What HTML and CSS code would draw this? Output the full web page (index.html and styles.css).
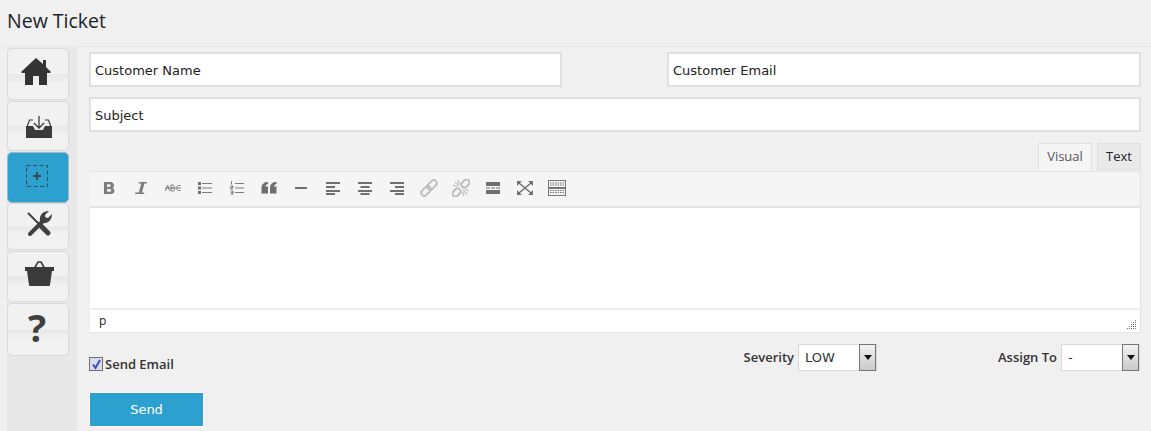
FILE: index.html
```html
<!DOCTYPE html>
<html lang="en">
<head>
<meta charset="utf-8">
<title>New Ticket</title>
<link rel="stylesheet" href="styles.css">
</head>
<body>
<header class="page-head"><h1>New Ticket</h1></header>
<div class="layout">
  <nav class="side">
    <a class="nav-btn nav-home"><svg width="30" height="28" viewBox="0 0 30 28"><path fill="#333" d="M15 0 L22 6 V2 H25 V9 L30 14 L29 15 H26 V27 H18 V18 H12 V27 H4 V15 H1 L0 14 Z"/></svg></a>
    <a class="nav-btn nav-inbox"><svg width="26" height="23" viewBox="0 0 26 23"><path fill="none" stroke="#3a3a3a" stroke-width="1.2" d="M7 4 H3.5 L1 11 M19 4 H22.5 L25 11"/><path fill="#3a3a3a" d="M0 10 H7 L9 14 H17 L19 10 H26 V22 H0 Z"/><path fill="none" stroke="#3a3a3a" stroke-width="1.3" d="M13 0 V12 M8 7 L13 12 L18 7"/></svg></a>
    <a class="nav-btn nav-active"><svg width="23" height="23" viewBox="0 0 23 23"><rect x=".5" y=".5" width="21" height="21" fill="none" stroke="#3d4a52" stroke-dasharray="4 2.5"/><path fill="none" stroke="#3d4a52" stroke-width="2" d="M11 7 V15 M7 11 H15"/></svg></a>
    <a class="nav-btn nav-tools"><svg width="26" height="26" viewBox="0 0 26 26"><path fill="none" stroke="#404040" stroke-width="2" d="M2 2 L13 13"/><path fill="none" stroke="#404040" stroke-width="5" stroke-linecap="round" d="M13.5 13.5 L22 22"/><path fill="none" stroke="#404040" stroke-width="4" stroke-linecap="round" d="M4 23 L16 11"/><path fill="#404040" d="M14 10 C13 4 17 0 23 0 L19 4 L19.5 6.5 L22 7 L26 3 C26 9 22 13 16 12 Z"/></svg></a>
    <a class="nav-btn nav-basket"><svg width="29" height="25" viewBox="0 0 29 25"><path fill="#3a3a3a" d="M0 6 H29 V10 H27 L25 24 Q25 25 24 25 H5 Q4 25 4 24 L2 10 H0 Z"/><path fill="none" stroke="#3a3a3a" stroke-width="1.6" d="M9 8 L13 1 H16 L20 8"/></svg></a>
    <a class="nav-btn nav-help"><span class="qmark">?</span></a>
  </nav>
  <main class="content">
    <div class="row-two">
      <input class="field" type="text" value="Customer Name">
      <input class="field" type="text" value="Customer Email">
    </div>
    <input class="field field-full" type="text" value="Subject">
    <div class="tabs">
      <span class="tab tab-on">Visual</span>
      <span class="tab">Text</span>
    </div>
    <section class="editor">
      <div class="toolbar">
        <span class="ti"><svg width="14" height="14" viewBox="0 0 14 14"><path fill="#7d7d7d" fill-rule="evenodd" d="M2 1 H8 C11 1 12 3 12 4.5 C12 6 11 6.6 10.5 7 C12 7.5 12.5 9 12.5 10 C12.5 12 11 13 8.5 13 H2 Z M5 3.3 V6 H7.5 C9 6 9 3.3 7.5 3.3 Z M5 8 V10.8 H8 C9.6 10.8 9.6 8 8 8 Z"/></svg></span>
        <span class="ti"><svg width="14" height="14" viewBox="0 0 14 14"><path fill="#7d7d7d" d="M5 1 H13 L12.6 2.6 H10.4 L8 11.4 H10.4 L10 13 H1 L1.4 11.4 H4.8 L7.2 2.6 H4.6 Z"/></svg></span>
        <span class="ti"><svg width="16" height="10" viewBox="0 0 16 10"><g fill="none" stroke="#7d7d7d"><path d="M0.5 8 L2.6 2 L4.7 8 M6 2 V8 H8.4 C10 8 10 5 8.4 5 H6 M6 2 H8.2 C9.6 2 9.6 5 8.2 5 M15.5 2.5 H13.5 C11.4 2.5 11.4 7.5 13.5 7.5 H15.5"/><path d="M0 5 H16"/></g></svg></span>
        <span class="ti"><svg width="14" height="14" viewBox="0 0 14 14"><path fill="#6f6f6f" d="M0 1 H3 V4 H0 Z M0 5.5 H3 V8.5 H0 Z M0 10 H3 V13 H0 Z"/><path stroke="#7d7d7d" d="M4 2.5 H14 M4 7 H14 M4 11.5 H14"/></svg></span>
        <span class="ti"><svg width="14" height="14" viewBox="0 0 14 14"><path stroke="#7d7d7d" fill="none" d="M1.5 0 V3.5 M.5 5 H3 V6.5 H.5 V8 H3 M.5 10 H3 V13 H.5 M1 11.5 H3"/><path stroke="#7d7d7d" d="M5 2.5 H14 M5 7 H14 M5 11.5 H14"/></svg></span>
        <span class="ti"><svg width="16" height="12" viewBox="0 0 16 12"><path fill="#6f6f6f" d="M7 0 V2 C5 2.5 4.5 3.5 4.5 4.5 H7 V11.5 H0.5 V5.5 C0.5 2 3.5 0 7 0 Z M15.5 0 V2 C13.5 2.5 13 3.5 13 4.5 H15.5 V11.5 H9 V5.5 C9 2 12 0 15.5 0 Z"/></svg></span>
        <span class="ti"><svg width="14" height="14" viewBox="0 0 14 14"><path fill="#6f6f6f" d="M1 6 H13 V8 H1 Z"/></svg></span>
        <span class="ti"><svg width="14" height="14" viewBox="0 0 14 14"><path fill="#6f6f6f" d="M0 1 H14 V3 H0 Z M0 5 H9 V7 H0 Z M0 9 H14 V11 H0 Z M0 12 H9 V14 H0 Z"/></svg></span>
        <span class="ti"><svg width="14" height="14" viewBox="0 0 14 14"><path fill="#6f6f6f" d="M0 1 H14 V3 H0 Z M2.5 5 H11.5 V7 H2.5 Z M0 9 H14 V11 H0 Z M2.5 12 H11.5 V14 H2.5 Z"/></svg></span>
        <span class="ti"><svg width="14" height="14" viewBox="0 0 14 14"><path fill="#6f6f6f" d="M0 1 H14 V3 H0 Z M5 5 H14 V7 H5 Z M0 9 H14 V11 H0 Z M5 12 H14 V14 H5 Z"/></svg></span>
        <span class="ti"><svg width="18" height="18" viewBox="0 0 18 18"><g fill="none" stroke="#bdbdbd" stroke-width="2"><rect x="0.5" y="9" width="11" height="6" rx="3" transform="rotate(-45 6 12)"/><rect x="6.5" y="3" width="11" height="6" rx="3" transform="rotate(-45 12 6)"/></g></svg></span>
        <span class="ti"><svg width="18" height="18" viewBox="0 0 18 18"><g fill="none" stroke="#bdbdbd" stroke-width="2"><rect x="0" y="10.5" width="9" height="6" rx="3" transform="rotate(-45 4.5 13.5)"/><rect x="9" y="1.5" width="9" height="6" rx="3" transform="rotate(-45 13.5 4.5)"/><path stroke-width="1.2" d="M3 3 L7 7 M6 1 L7.5 5 M1 6 L5 7.5 M15 15 L11 11 M12 17 L10.5 13 M17 12 L13 10.5"/></g></svg></span>
        <span class="ti"><svg width="14" height="14" viewBox="0 0 14 14"><path fill="#6f6f6f" d="M0 1 H14 V5 H0 Z M0 6.5 H4 V7.5 H0 Z M5 6.5 H9 V7.5 H5 Z M10 6.5 H14 V7.5 H10 Z M0 9 H14 V13 H0 Z"/></svg></span>
        <span class="ti"><svg width="16" height="14" viewBox="0 0 16 14"><g fill="#6f6f6f"><path d="M0 0 H5 L3.4 1.6 L0 5 Z"/><path d="M16 0 H11 L12.6 1.6 L16 5 Z"/><path d="M0 14 H5 L3.4 12.4 L0 9 Z"/><path d="M16 14 H11 L12.6 12.4 L16 9 Z"/></g><path fill="none" stroke="#6f6f6f" stroke-width="1.5" d="M2 2 L14 12 M14 2 L2 12"/></svg></span>
        <span class="ti"><svg width="18" height="16" viewBox="0 0 18 16"><rect x=".5" y=".5" width="17" height="15" fill="#f4f4f4" stroke="#777"/><path stroke="#777" d="M1 7.5 H17 M1 8.5 H17"/><path stroke="#777" stroke-dasharray="1.5 1" d="M2 3 H16 M2 5 H16 M2 10.5 H16 M2 12.5 H16"/></svg></span>
      </div>
      <div class="edit-area"></div>
      <div class="status"><span>p</span><svg class="grip" width="10" height="10" viewBox="0 0 10 10"><path stroke="#777" stroke-dasharray="1 1" d="M0 9.5 H10 M2 7.5 H10 M4 5.5 H10 M6 3.5 H10 M8 1.5 H10"/></svg></div>
    </section>
    <div class="options">
      <label class="check"><span class="box"><svg width="11" height="11" viewBox="0 0 11 11"><path fill="none" stroke="#3f4fa8" stroke-width="2" d="M2 5.5 L4.5 9 L9 1"/></svg></span>Send Email</label>
      <div class="pick-sev">
        <label>Severity</label>
        <div class="sel"><span>LOW</span><i class="arrow"></i></div>
      </div>
      <div class="pick-assign">
        <label>Assign To</label>
        <div class="sel"><span>-</span><i class="arrow"></i></div>
      </div>
    </div>
    <button class="send" type="button">Send</button>
  </main>
</div>
</body>
</html>
```
FILE: styles.css
```css
* { box-sizing: border-box; }
html, body { margin: 0; height: 431px; overflow: hidden; }
body { background: #f0f0f0; font-family: "Open Sans", sans-serif; color: #222; }
.page-head { height: 47px; border-bottom: 1px solid #e8e8e8; padding: 8px 0 0 7px; }
.page-head h1 { margin: 0; font-size: 19.5px; font-weight: 400; line-height: 26px; color: #1e2328; }
.layout { display: flex; height: 384px; padding-left: 7px; }
.side { width: 70px; background: #e8e8e8; padding-top: 1px; flex: none; }
.nav-btn { display: flex; align-items: center; justify-content: center; width: 62px; border: 1px solid #dadada; border-radius: 5px; background: linear-gradient(#f1f1f1 49%, #e7e7e7 52%, #f2f2f2 68%); }
.nav-home { height: 52px; padding: 0 5px 4px 0; }
.nav-inbox { height: 50px; margin-top: 1px; padding: 3px 0 0 1px; }
.nav-active { height: 51px; margin-top: 1px; padding: 0 2px 2px 0; background: #2ca1d0; border-color: #9fb7c2; }
.nav-tools { height: 47px; padding: 0 0 5px 2px; }
.nav-basket { height: 51px; margin-top: 1px; padding: 0 0 6px 3px; }
.nav-help { height: 53px; margin-top: 1px; padding: 0 2px 6px 0; }
.qmark { font: 700 38px/1 "Open Sans", sans-serif; color: #404040; }
.content { flex: 1; padding: 5px 10px 0 12px; min-width: 0; }
.row-two { display: flex; justify-content: space-between; }
.field { display: block; width: 473px; height: 35px; border: 2px solid #e0e0e0; background: #fff; padding: 2px 4px 0; font: 13px "DejaVu Sans", sans-serif; color: #222; outline: none; }
.row-two .field:last-child { width: 474px; }
.field-full { width: 100%; margin-top: 10px; }
.tabs { display: flex; justify-content: flex-end; gap: 5px; margin-top: 11px; height: 28px; position: relative; z-index: 1; }
.tab { width: 44px; height: 27px; border: 1px solid #dfdfdf; background: #e9e9e9; font-size: 13px; line-height: 25px; text-align: center; color: #222; }
.tab-on { width: 54px; height: 28px; background: #f5f5f5; border-bottom: 0; color: #555; }
.editor { background: #fff; border-left: 1px solid #f0f0f0; border-right: 1px solid #e4e4e4; border-bottom: 1px solid #e4e4e4; }
.toolbar { height: 37px; background: #f5f5f5; border-top: 1px solid #e4e4e4; border-bottom: 2px solid #e2e2e2; display: flex; align-items: center; padding: 0 3px 2px 9px; gap: 12px; }
.ti { width: 20px; display: flex; justify-content: center; }
.edit-area { height: 100px; }
.status { height: 24px; border-top: 2px solid #eee; position: relative; padding-left: 9px; font-size: 12px; line-height: 22px; }
.grip { position: absolute; right: 3px; bottom: 3px; }
.options { display: flex; align-items: flex-start; height: 59px; position: relative; font: 600 13px "Open Sans", sans-serif; color: #333; }
.check { display: flex; align-items: center; margin-top: 22px; }
.box { width: 14px; height: 14px; border: 1px solid #707070; background: #d4dcee; display: flex; align-items: center; justify-content: center; margin-right: 2px; }
.pick-sev, .pick-assign { display: flex; align-items: center; gap: 4px; margin-top: 11px; }
.pick-sev label, .pick-assign label { padding-bottom: 2px; }
.pick-sev { margin-left: auto; margin-right: 121px; }
.pick-sev .sel { width: 79px; }
.pick-assign { gap: 4px; margin-right: 1px; }
.pick-assign .sel { width: 79px; }
.sel { position: relative; height: 27px; border: 1px solid #d8d8d8; background: #fff; font: 13px "DejaVu Sans", sans-serif; line-height: 25px; padding-left: 6px; color: #333; }
.arrow { position: absolute; right: 0; top: -1px; width: 17px; height: 27px; border: 1px solid #777; background: linear-gradient(#f3f3f3, #c9c9c9); }
.arrow::after { content: ""; position: absolute; left: 4px; top: 10px; border: 4px solid transparent; border-top: 5px solid #111; border-bottom: 0; }
.send { display: block; width: 115px; height: 35px; border: 1px solid #fff; background: #2ca1d0; color: #fff; font: 13px "DejaVu Sans", sans-serif; }
```
